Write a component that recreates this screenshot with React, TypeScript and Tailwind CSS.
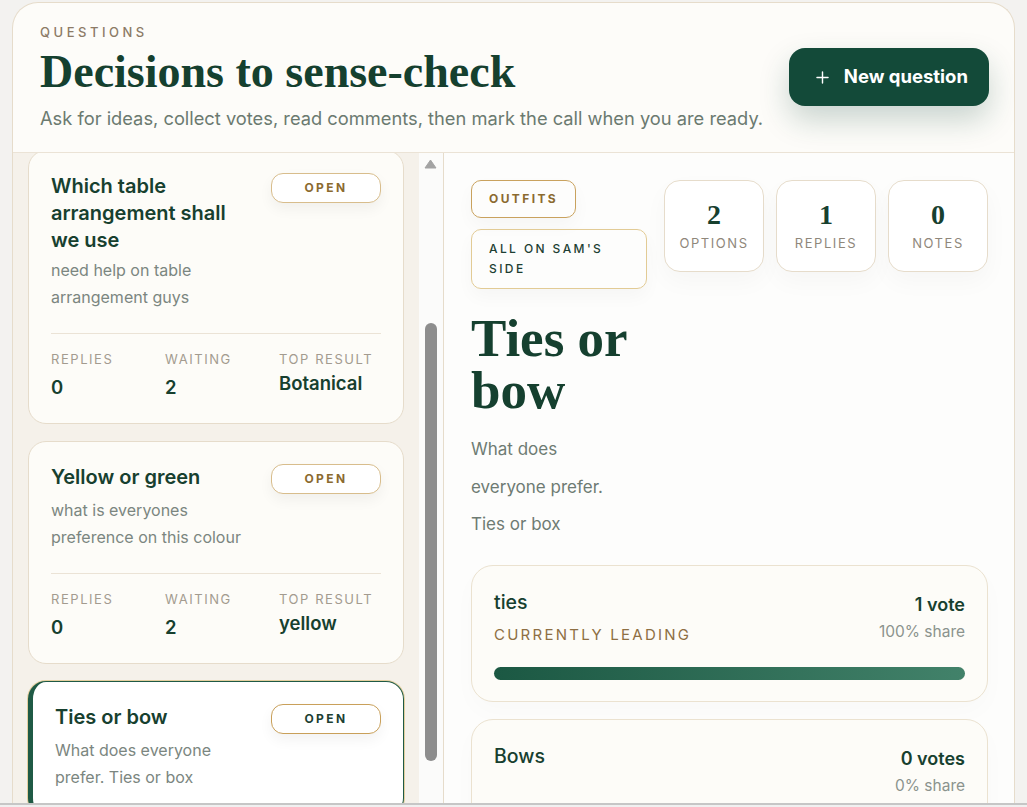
import { Plus } from 'lucide-react';

const serif = { fontFamily: '"Liberation Serif", "DejaVu Serif", serif' };

interface QuestionCardProps {
  title: string;
  desc: string;
  replies?: string;
  waiting?: string;
  top?: string;
  selected?: boolean;
}

function QuestionCard({ title, desc, replies, waiting, top, selected }: QuestionCardProps) {
  return (
    <div
      className={
        selected
          ? 'rounded-[18px] border border-[#1f5a45] border-l-[5px] bg-white pl-[22px] pr-[22px] pt-[22px] pb-[24px] ring-1 ring-[#e3cf9f]'
          : 'rounded-[18px] border border-[#e6dccb] bg-[#fdfcf8] px-[22px] pt-[22px] pb-[24px]'
      }
    >
      <div className="flex items-start justify-between gap-5">
        <h3 className="flex-1 text-[20px] font-semibold leading-[27px] text-[#17402f]">{title}</h3>
        <span
          className={
            selected
              ? 'flex h-[30px] w-[110px] shrink-0 items-center justify-center rounded-[12px] border border-[#c9a05a] bg-white text-[12px] font-bold tracking-[0.2em] text-[#1d3f33] shadow-[0_6px_14px_rgba(0,0,0,0.05)]'
              : 'flex h-[30px] w-[110px] shrink-0 items-center justify-center rounded-[12px] border border-[#d8bd8c] bg-white text-[12px] font-bold tracking-[0.2em] text-[#8b6a2f] shadow-[0_6px_14px_rgba(0,0,0,0.05)]'
          }
        >
          OPEN
        </span>
      </div>
      <p className="mt-[3px] max-w-[200px] text-[16px] leading-[27px] text-[#7b8680]">{desc}</p>
      {replies !== undefined && (
        <div className="mt-[22px] grid grid-cols-3 gap-3 border-t border-[#ebe3d6] pt-[16px]">
          <div>
            <div className="text-[13px] leading-[18px] tracking-[0.12em] text-[#a39b8f]">REPLIES</div>
            <div className="mt-[7px] text-[18.5px] font-semibold leading-[24px] text-[#17402f]">{replies}</div>
          </div>
          <div>
            <div className="text-[13px] leading-[18px] tracking-[0.12em] text-[#a39b8f]">WAITING</div>
            <div className="mt-[7px] text-[18.5px] font-semibold leading-[24px] text-[#17402f]">{waiting}</div>
          </div>
          <div>
            <div className="text-[13px] leading-[18px] tracking-[0.12em] text-[#a39b8f]">TOP RESULT</div>
            <div className="mt-[3px] text-[18.5px] font-semibold leading-[24px] text-[#17402f]">{top}</div>
          </div>
        </div>
      )}
    </div>
  );
}

function StatBox({ value, label }: { value: string; label: string }) {
  return (
    <div className="flex h-[92px] w-[100px] flex-col items-center justify-center rounded-[16px] border border-[#e6dccb] bg-white shadow-[0_10px_24px_rgba(0,0,0,0.03)]">
      <div style={serif} className="text-[28px] font-bold leading-[30px] text-[#17402f]">
        {value}
      </div>
      <div className="mt-[4px] text-[13px] leading-[18px] tracking-[0.12em] text-[#8f877b]">{label}</div>
    </div>
  );
}

function OptionCard({ name, leading, votes, share, pct }: { name: string; leading?: boolean; votes: string; share: string; pct: number }) {
  return (
    <div className="rounded-[22px] border border-[#ebe2d0] bg-[#fdfcf8] px-[22px] pt-[24px] pb-[21px] shadow-[0_10px_24px_rgba(0,0,0,0.02)]">
      <div className="flex items-start justify-between">
        <div>
          <div className="text-[19.5px] font-medium leading-[24px] text-[#17402f]">{name}</div>
          {leading && (
            <div className="mt-[11px] text-[15px] leading-[20px] tracking-[0.15em] text-[#8e6f43]">CURRENTLY LEADING</div>
          )}
        </div>
        <div className="pt-[2px] text-right">
          <div className="text-[18px] font-semibold leading-[26px] text-[#17402f]">{votes}</div>
          <div className="mt-[4px] text-[15.5px] leading-[20px] text-[#8b938d]">{share}</div>
        </div>
      </div>
      <div className="mt-[22px] h-[13px] w-full rounded-full bg-[#f1ece4]">
        <div
          className="h-full rounded-full bg-gradient-to-r from-[#1b5843] to-[#42826a]"
          style={{ width: `${pct}%` }}
        />
      </div>
    </div>
  );
}

export default function App() {
  return (
    <div
      className="flex h-[807px] w-[1027px] flex-col overflow-hidden bg-[#f3f2f0]"
      style={{ fontFamily: 'Inter, "Noto Sans", sans-serif' }}
    >
      <div className="ml-[12px] mt-[2px] flex min-h-0 w-[1003px] flex-1 flex-col overflow-hidden rounded-t-[26px] border border-b-0 border-[#e6dccb] bg-[#fdfcf9]">
        {/* header */}
        <header className="flex h-[150px] shrink-0 items-center justify-between border-b border-[#ebe3d6] pb-[1px] pl-[27px] pr-[25px]">
          <div>
            <div className="text-[13px] font-medium leading-[16px] tracking-[0.27em] text-[#8c7a66]">QUESTIONS</div>
            <h1 style={serif} className="mt-[6px] text-[46px] font-bold leading-[52px] text-[#15402f]">
              Decisions to sense-check
            </h1>
            <p className="mt-[8px] text-[18.3px] leading-[24px] text-[#6b7a70]">
              Ask for ideas, collect votes, read comments, then mark the call when you are ready.
            </p>
          </div>
          <button className="flex h-[58px] items-center gap-[12px] rounded-[16px] bg-[#134a39] pl-[24px] pr-[21px] text-[18.5px] font-bold text-white shadow-[0_14px_30px_rgba(19,74,57,0.22)]">
            <Plus className="h-[19px] w-[19px]" strokeWidth={1.8} />
            New question
          </button>
        </header>

        <div className="flex min-h-0 flex-1">
          {/* question list */}
          <div className="w-[406px] shrink-0 overflow-hidden bg-[#f5f1ea] px-[15px]">
            <div className="-mt-[3px] flex flex-col gap-[17px]">
              <QuestionCard
                title="Which table arrangement shall we use"
                desc="need help on table arrangement guys"
                replies="0"
                waiting="2"
                top="Botanical"
              />
              <QuestionCard
                title="Yellow or green"
                desc="what is everyones preference on this colour"
                replies="0"
                waiting="2"
                top="yellow"
              />
              <QuestionCard title="Ties or bow" desc="What does everyone prefer. Ties or box" selected />
            </div>
          </div>

          {/* scrollbar */}
          <div className="flex w-[25px] shrink-0 flex-col items-center border-r border-[#e6dccb] bg-[#fbfbfa] pr-[1px]">
            <svg width="13" height="10" viewBox="0 0 13 10" className="mt-[6px]">
              <path d="M6.5 1 L12 9 L1 9 Z" fill="#a3a3a3" stroke="#a3a3a3" strokeLinejoin="round" />
            </svg>
            <div className="mt-[154px] h-[438px] w-[12px] rounded-full bg-[#8d8d8d]" />
          </div>

          {/* detail */}
          <div className="min-w-0 flex-1 overflow-hidden bg-[#fdfdfc] pl-[27px] pr-[26px] pt-[27px]">
            <div className="flex gap-[17px]">
              <div className="min-w-0 flex-1">
                <div className="flex flex-col items-start gap-[11px]">
                  <span className="flex h-[38px] items-center rounded-[10px] border border-[#c9a25e] px-[17px] text-[12px] font-bold tracking-[0.2em] text-[#8b6a2f] shadow-[0_8px_18px_rgba(0,0,0,0.03)]">
                    OUTFITS
                  </span>
                  <span className="w-full rounded-[10px] border border-[#e2cb95] px-[17px] py-[9px] text-[12px] font-medium leading-[20px] tracking-[0.2em] text-[#1d3f33] shadow-[0_8px_18px_rgba(0,0,0,0.03)]">
                    ALL ON SAM'S SIDE
                  </span>
                </div>
                <h2 style={serif} className="mt-[23px] text-[53px] font-bold leading-[52px] text-[#15402f]">
                  Ties or bow
                </h2>
                <p className="mt-[15px] max-w-[150px] text-[17px] leading-[37.5px] text-[#6e7b73]">
                  What does everyone prefer. Ties or box
                </p>
              </div>
              <div className="flex shrink-0 items-start gap-[12px]">
                <StatBox value="2" label="OPTIONS" />
                <StatBox value="1" label="REPLIES" />
                <StatBox value="0" label="NOTES" />
              </div>
            </div>

            <div className="mt-[21px] flex flex-col gap-[17px]">
              <OptionCard name="ties" leading votes="1 vote" share="100% share" pct={100} />
              <OptionCard name="Bows" votes="0 votes" share="0% share" pct={0} />
            </div>
          </div>
        </div>
      </div>
      <div className="h-[4px] shrink-0 border-t-2 border-[#c6c6c6] bg-[#f0f0f0]" />
    </div>
  );
}
